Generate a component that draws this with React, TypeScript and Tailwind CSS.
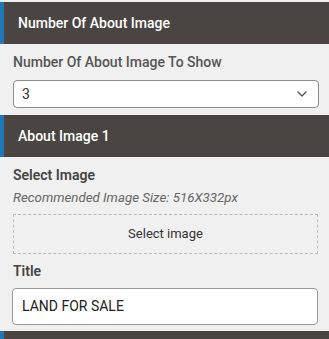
import { ChevronDown } from "lucide-react"

function SectionHeader({ title }: { title: string }) {
    return (
        <div className="h-[42px] flex items-center bg-[#4a4543] border-l-4 border-[#1f78b5] pl-[14px]">
            <h2 className="text-white text-[14px] font-medium">{title}</h2>
        </div>
    )
}

export default function App() {
    return (
        <div className="w-full h-[339px] overflow-hidden bg-[#f0f0f0] pt-[2px] font-['Roboto',sans-serif]">
            <SectionHeader title="Number Of About Image" />
            <div className="pl-[13px] pr-[10px] pt-[9px] pb-[7px] flex flex-col">
                <label className="text-[14px] text-[#555] font-medium leading-[18px]">Number Of About Image To Show</label>
                <div className="mt-[9px] h-[28px] bg-white border border-[#8c8c8c] rounded-[4px] flex items-center justify-between pl-[8px] pr-[8px]">
                    <span className="text-[14px] text-[#333]">3</span>
                    <ChevronDown size={16} strokeWidth={2} className="text-[#555]" />
                </div>
            </div>
            <SectionHeader title="About Image 1" />
            <div className="pl-[13px] pr-[11px] pt-[9px] flex flex-col">
                <label className="text-[14px] text-[#444] font-semibold leading-[18px]">Select Image</label>
                <p className="mt-[6px] text-[13.3px] italic text-[#666] leading-[16px]">Recommended Image Size: 516X332px</p>
                <div className="mt-[8px] h-[40px] border border-dashed border-[#bbb] flex items-center justify-center">
                    <span className="text-[13px] text-[#333]">Select image</span>
                </div>
                <label className="mt-[8px] text-[14px] text-[#444] font-semibold leading-[18px]">Title</label>
                <div className="mt-[8px] -ml-px h-[37px] bg-white border border-[#999] rounded-[4px] flex items-center pl-[9px]">
                    <span className="text-[14px] text-[#222]">LAND FOR SALE</span>
                </div>
            </div>
            <div className="mt-[6px]">
                <SectionHeader title="" />
            </div>
        </div>
    )
}
